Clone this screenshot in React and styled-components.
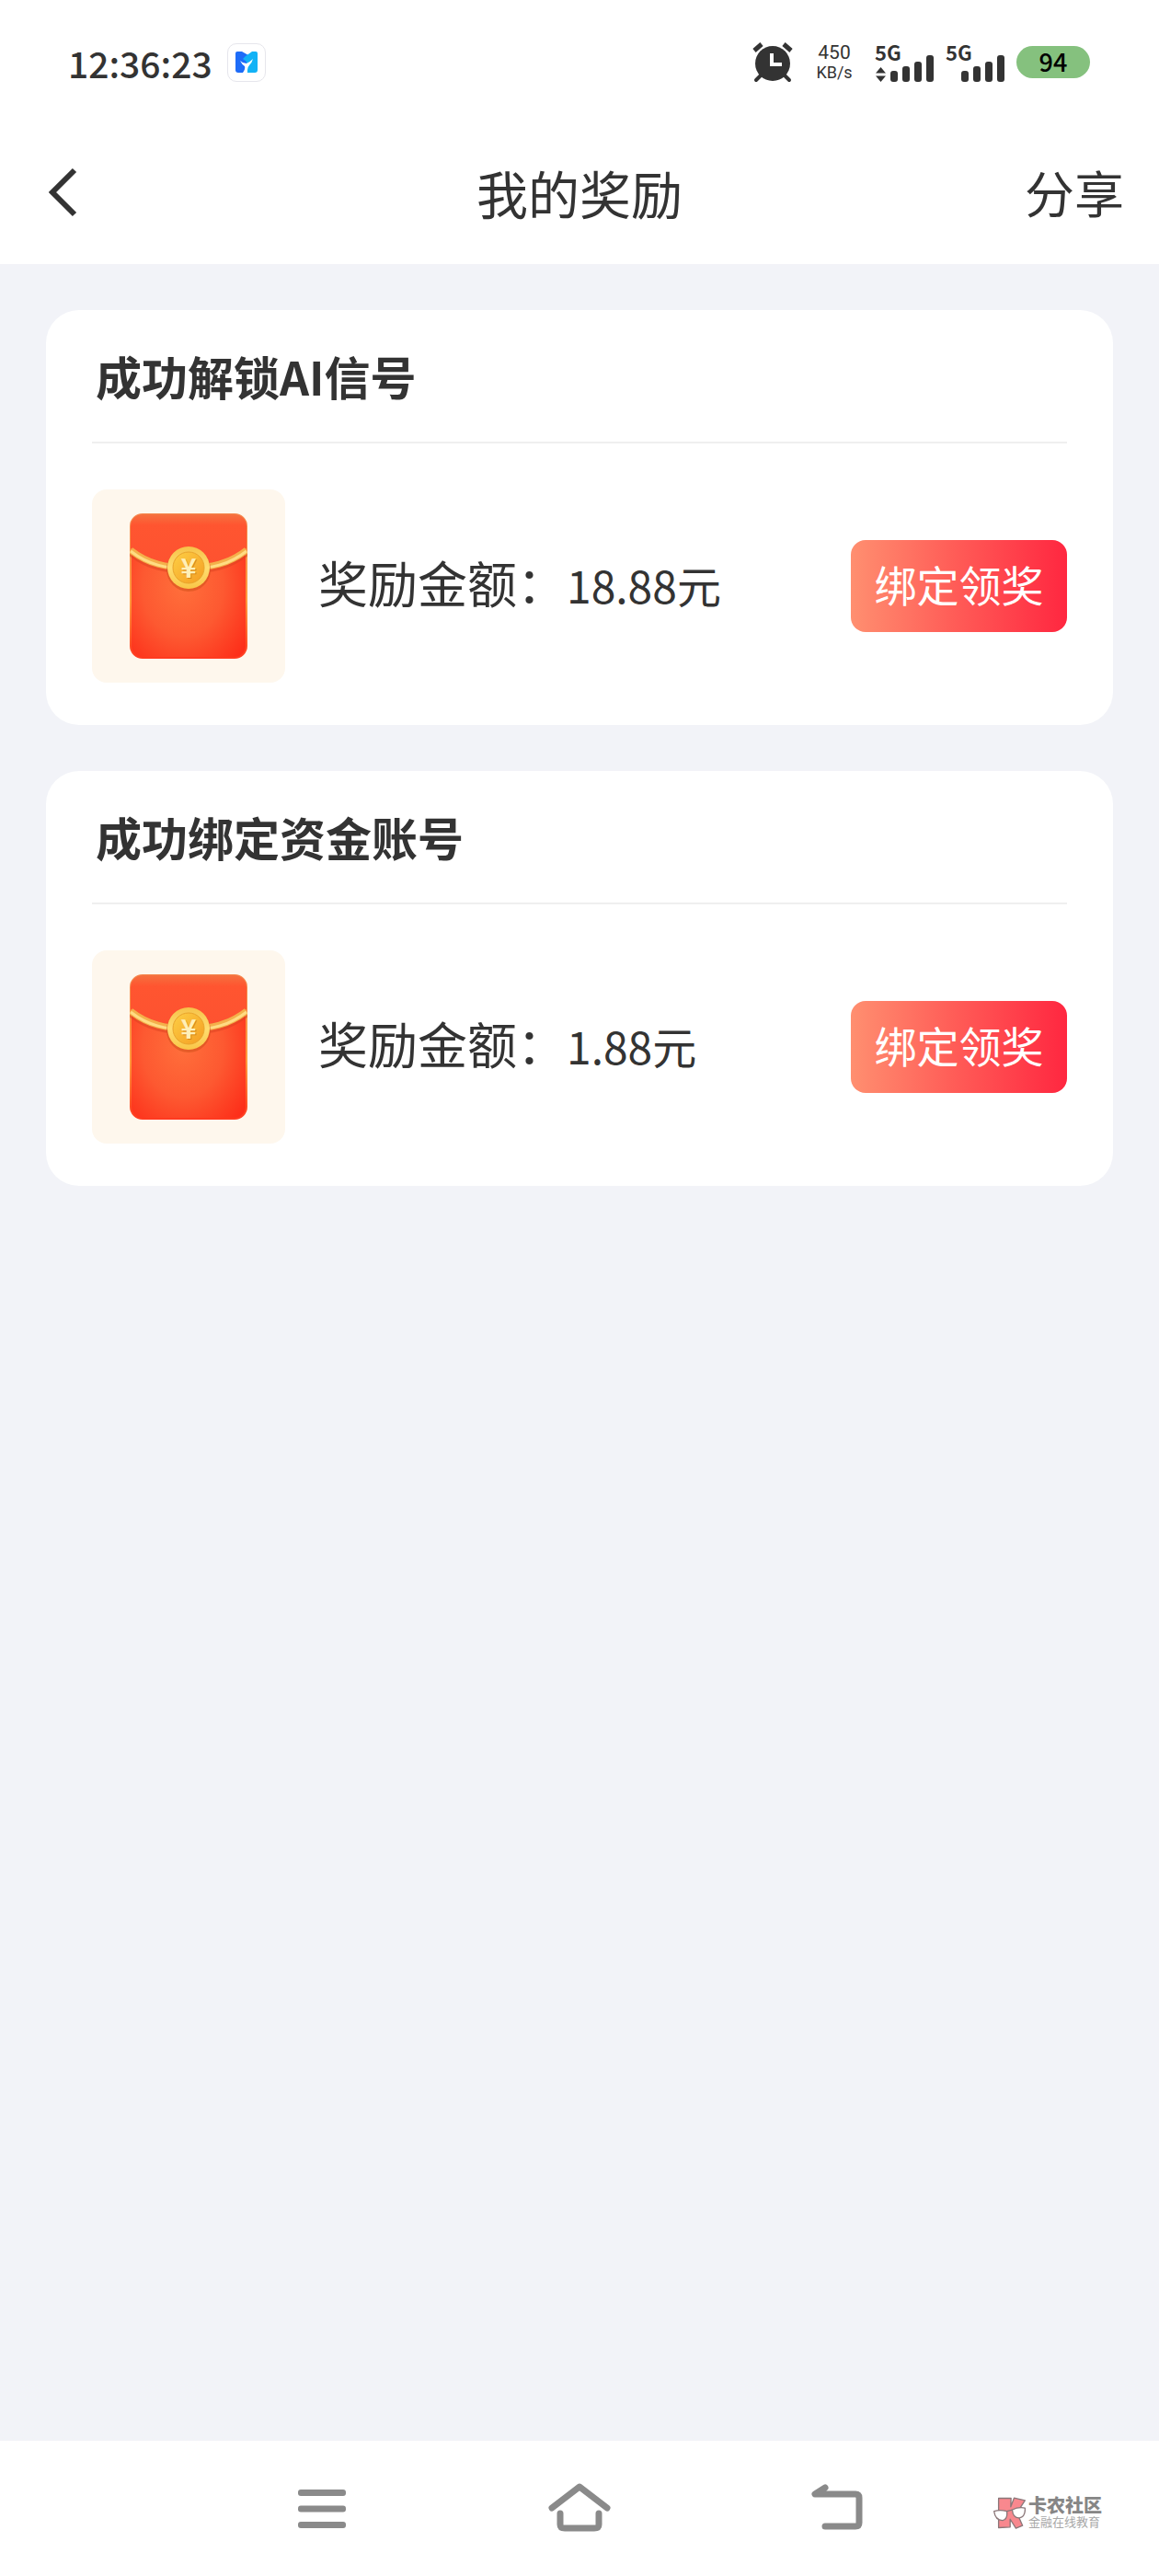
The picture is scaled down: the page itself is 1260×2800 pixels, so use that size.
import styled, { createGlobalStyle } from 'styled-components';

const GlobalStyle = createGlobalStyle`
  * {
    box-sizing: border-box;
  }
  body {
    margin: 0;
    background: #f2f3f8;
    color: #333333;
    font-family: 'Noto Sans CJK SC', sans-serif;
  }
  h1, h2, p {
    margin: 0;
  }
  button {
    font-family: inherit;
    color: inherit;
    border: none;
    padding: 0;
    background: none;
    cursor: pointer;
  }
  svg {
    display: block;
  }
`;

const Page = styled.div`
  min-height: 100vh;
  display: flex;
  flex-direction: column;
`;

/* status bar */

const StatusBar = styled.div`
  height: 137px;
  padding: 0 75px 2px 74px;
  background: #ffffff;
  display: flex;
  align-items: center;
  justify-content: space-between;
`;

const StatusGroup = styled.div`
  display: flex;
  align-items: center;
`;

const Clock = styled.span`
  font-size: 39px;
  font-weight: 500;
  line-height: 48px;
`;

const AppBadge = styled.span`
  width: 42px;
  height: 42px;
  margin-left: 16px;
  border: 1px solid #e6e6ec;
  border-radius: 10px;
  display: flex;
  align-items: center;
  justify-content: center;
`;

const NetSpeed = styled.div`
  width: 36px;
  margin: 0 26px 0 27px;
  display: flex;
  flex-direction: column;
  align-items: center;
  font-family: Roboto, sans-serif;
  font-size: 18px;
  line-height: 22px;
  span:first-child {
    font-size: 21px;
  }
`;

const Signal = styled.div`
  width: 64px;
  height: 42px;
  margin-right: 13px;
  font-size: 22px;
  font-weight: 700;
  line-height: 18px;
  display: flex;
  flex-direction: column;
`;

const SignalBars = styled.div`
  height: 30px;
  margin-top: -6px;
  display: flex;
  align-items: flex-end;
  justify-content: flex-end;
  gap: 5px;
`;

const Bar = styled.i`
  width: 8px;
  height: ${(props) => props.$height}px;
  border-radius: 3px;
  background: #333333;
`;

const Battery = styled.span`
  width: 80px;
  height: 35px;
  border-radius: 18px;
  background: #85c17e;
  color: #000000;
  font-size: 27px;
  font-weight: 500;
  line-height: 33px;
  text-align: center;
`;

/* page header */

const Header = styled.header`
  height: 150px;
  padding: 0 38px 6px 50px;
  background: #ffffff;
  display: grid;
  grid-template-columns: 1fr auto 1fr;
  align-items: center;
  h1 {
    font-size: 56px;
    font-weight: 400;
    line-height: 80px;
    /* side paddings differ, keep the title on the middle of the screen */
    margin-left: -12px;
  }
`;

const BackButton = styled.button`
  justify-self: start;
`;

const ShareButton = styled.button`
  justify-self: end;
  font-size: 54px;
  line-height: 80px;
`;

/* reward cards */

const RewardList = styled.main`
  flex: 1;
  padding: 50px;
  display: flex;
  flex-direction: column;
  gap: 50px;
`;

const Card = styled.section`
  padding: 0 50px 46px;
  border-radius: 36px;
  background: #ffffff;
`;

const CardTitle = styled.h2`
  padding: 35px 4px 36px;
  border-bottom: 2px solid #efefef;
  font-size: 50px;
  font-weight: 700;
  line-height: 72px;
`;

const CardBody = styled.div`
  padding-top: 50px;
  display: flex;
  align-items: center;
`;

const Thumb = styled.div`
  width: 210px;
  height: 210px;
  border-radius: 16px;
  background: #fef7ed;
  display: flex;
  align-items: center;
  justify-content: center;
`;

const Amount = styled.p`
  flex: 1;
  margin-left: 36px;
  padding-bottom: 6px;
  display: flex;
  align-items: baseline;
  font-size: 54px;
  line-height: 80px;
  span:last-child {
    font-size: 48px;
  }
`;

const ClaimButton = styled.button`
  width: 235px;
  height: 100px;
  padding-bottom: 6px;
  border-radius: 16px;
  background: linear-gradient(90deg, #ff8f70 0%, #ff5a56 50%, #ff2740 100%);
  color: #ffffff;
  font-size: 46px;
  line-height: 90px;
`;

/* system navigation */

const NavBar = styled.nav`
  height: 147px;
  background: #ffffff;
  display: grid;
  grid-template-columns: 3fr 4fr 4fr 4fr 3fr;
  align-items: center;
`;

const NavButton = styled.button`
  grid-column: ${(props) => props.$column};
  justify-self: center;
`;

const Brand = styled.div`
  grid-column: 5;
  justify-self: end;
  margin: 8px 62px 0 0;
  display: flex;
  align-items: center;
  gap: 3px;
`;

const BrandText = styled.div`
  display: flex;
  flex-direction: column;
  white-space: nowrap;
  font-size: 13px;
  line-height: 14px;
  color: #a8a8a8;
  padding-bottom: 2px;
  strong {
    font-size: 20px;
    font-weight: 900;
    line-height: 22px;
    color: #868686;
  }
`;

const AppLogo = () => (
  <svg width="24" height="23" viewBox="0 0 24 23" aria-hidden="true">
    <path d="M2 0h5l7 4v19H3a3 3 0 0 1-3-3V2a2 2 0 0 1 2-2z" fill="#1e6cf8" />
    <path d="M22 0h-4l-7 5-3 3 4 3v12h9a3 3 0 0 0 3-3V2a2 2 0 0 0-2-2z" fill="#12b2f6" />
    <path d="M5 10q3 3 7 3 3-1 7-5-1 4-4 7-2 2-2 5v3H8q3-4 2-7-3-2-5-6z" fill="#ffffff" />
  </svg>
);

const AlarmIcon = () => (
  <svg width="44" height="44" viewBox="0 0 44 44" fill="none" aria-hidden="true">
    <path d="M9 36l-5 5M35 36l5 5" stroke="#333333" strokeWidth="4" strokeLinecap="round" />
    <path d="M2 9l8-7M34 2l8 7" stroke="#333333" strokeWidth="5" />
    <circle cx="22" cy="23" r="19" fill="#333333" />
    <path d="M21 12v12h11" stroke="#ffffff" strokeWidth="4" />
  </svg>
);

const DataArrows = () => (
  <svg width="11" height="16" viewBox="0 0 22 32" fill="#333333" aria-hidden="true">
    <path d="M11 0l11 13H0zM11 32L0 19h22z" />
  </svg>
);

const BackIcon = () => (
  <svg width="36" height="56" viewBox="0 0 36 56" fill="none" aria-hidden="true">
    <path d="M31 4L7 28l24 24" stroke="#333333" strokeWidth="6" />
  </svg>
);

const RedEnvelope = ({ id }) => (
  <svg width="128" height="158" viewBox="0 0 128 158" role="img" aria-label="红包">
    <defs>
      <radialGradient id={`${id}-body`} cx="0.45" cy="0.5" r="0.7">
        <stop offset="0" stopColor="#ff6f3b" />
        <stop offset="0.5" stopColor="#fd5931" />
        <stop offset="1" stopColor="#fd2c18" />
      </radialGradient>
      <linearGradient id={`${id}-flap`} x1="0" y1="0" x2="0" y2="1">
        <stop offset="0" stopColor="#f5713f" />
        <stop offset="0.2" stopColor="#ff5530" />
        <stop offset="1" stopColor="#fd5230" />
      </linearGradient>
      <linearGradient id={`${id}-edge`} x1="0" y1="0" x2="0" y2="1">
        <stop offset="0" stopColor="#f58a50" />
        <stop offset="0.6" stopColor="#ff9a3c" />
        <stop offset="1" stopColor="#ff3a20" />
      </linearGradient>
      <linearGradient id={`${id}-coin`} x1="0" y1="0" x2="0" y2="1">
        <stop offset="0" stopColor="#f6c248" />
        <stop offset="0.5" stopColor="#ffdd70" />
        <stop offset="1" stopColor="#f9c647" />
      </linearGradient>
      <linearGradient id={`${id}-inner`} x1="0" y1="0" x2="1" y2="1">
        <stop offset="0" stopColor="#fdcf45" />
        <stop offset="1" stopColor="#f49d22" />
      </linearGradient>
    </defs>
    <rect x="1" y="1" width="126" height="156" rx="13" fill={`url(#${id}-body)`} stroke={`url(#${id}-edge)`} strokeWidth="2" />
    <path d="M1 38V14A13 13 0 0 1 14 1h100a13 13 0 0 1 13 13v24Q64 82 1 38z" fill={`url(#${id}-flap)`} />
    <path d="M1 43C20 58 40 62 64 62S108 58 127 43" stroke="#d9421f" strokeWidth="7" fill="none" opacity="0.5" />
    <path d="M1 40C20 55 40 59 64 59S108 55 127 40" stroke="#f4b04a" strokeWidth="7" fill="none" />
    <path d="M1 41C20 56 40 60 64 60S108 56 127 41" stroke="#ffdc83" strokeWidth="3" fill="none" />
    <circle cx="64" cy="61" r="24" fill="#d4521c" opacity="0.6" />
    <circle cx="64" cy="59" r="23" fill={`url(#${id}-coin)`} />
    <circle cx="64" cy="59" r="17" fill={`url(#${id}-inner)`} stroke="#e9a32b" strokeWidth="1" />
    <text x="65" y="71" textAnchor="middle" fontSize="29" fontWeight="700" fill="#d98718" aria-hidden="true">¥</text>
    <text x="64" y="70" textAnchor="middle" fontSize="29" fontWeight="700" fill="#fff0b8">¥</text>
  </svg>
);

const MenuIcon = () => (
  <svg width="52" height="42" viewBox="0 0 104 84" fill="#8a8a8a" aria-hidden="true">
    <rect width="104" height="14" rx="6" />
    <rect y="35" width="104" height="14" rx="6" />
    <rect y="70" width="104" height="14" rx="6" />
  </svg>
);

const HomeIcon = () => (
  <svg width="68" height="58" viewBox="0 0 68 58" fill="none" stroke="#8a8a8a" strokeLinecap="round" strokeLinejoin="round" aria-hidden="true">
    <path d="M4 28L34 5l30 23" strokeWidth="7" />
    <path d="M13 34v12q0 4 5 4h32q5 0 5-4V34" strokeWidth="7" />
  </svg>
);

const ReturnIcon = () => (
  <svg width="56" height="56" viewBox="0 0 56 56" fill="none" stroke="#8a8a8a" strokeWidth="7" strokeLinecap="round" strokeLinejoin="round" aria-hidden="true">
    <path d="M15 5L4 12h44q4 0 4 4v27q0 4-4 4H15" />
  </svg>
);

const BrandLogo = () => (
  <svg width="35" height="36" viewBox="0 0 106 108" stroke="#8b7779" strokeWidth="4" strokeLinejoin="round" aria-hidden="true">
    <path d="M17 7h41l-1 28L68 6l36 8-27 41 19 42-22 9-19-30v26l-38 2z" fill="#f8888e" />
    <path d="M2 50q20-6 42 0 4 26-14 30Q6 80 2 50z" fill="#ffffff" />
    <path d="M62 45q20-10 42-6 2 28-18 33-22 1-24-27z" fill="#ffffff" />
    <path d="M44 50l18-5" />
  </svg>
);

const rewards = [
  { id: 'signal', title: '成功解锁AI信号', amount: '18.88元' },
  { id: 'account', title: '成功绑定资金账号', amount: '1.88元' },
];

const bars = [12, 17, 22, 29];

const SignalLevel = ({ active }) => (
  <Signal>
    <span>5G</span>
    <SignalBars>
      {active && <DataArrows />}
      {bars.map((height) => (
        <Bar key={height} $height={height} />
      ))}
    </SignalBars>
  </Signal>
);

const RewardCard = ({ id, title, amount }) => (
  <Card>
    <CardTitle>{title}</CardTitle>
    <CardBody>
      <Thumb>
        <RedEnvelope id={id} />
      </Thumb>
      <Amount>
        <span>奖励金额：</span>
        <span>{amount}</span>
      </Amount>
      <ClaimButton type="button">绑定领奖</ClaimButton>
    </CardBody>
  </Card>
);

const App = () => {
  return (
    <Page>
      <GlobalStyle />
      <StatusBar>
        <StatusGroup>
          <Clock>12:36:23</Clock>
          <AppBadge>
            <AppLogo />
          </AppBadge>
        </StatusGroup>
        <StatusGroup>
          <AlarmIcon />
          <NetSpeed>
            <span>450</span>
            <span>KB/s</span>
          </NetSpeed>
          <SignalLevel active />
          <SignalLevel />
          <Battery>94</Battery>
        </StatusGroup>
      </StatusBar>
      <Header>
        <BackButton type="button" aria-label="返回">
          <BackIcon />
        </BackButton>
        <h1>我的奖励</h1>
        <ShareButton type="button">分享</ShareButton>
      </Header>
      <RewardList>
        {rewards.map((reward) => (
          <RewardCard key={reward.id} {...reward} />
        ))}
      </RewardList>
      <NavBar>
        <NavButton type="button" $column={2} aria-label="菜单">
          <MenuIcon />
        </NavButton>
        <NavButton type="button" $column={3} aria-label="主页">
          <HomeIcon />
        </NavButton>
        <NavButton type="button" $column={4} aria-label="后退">
          <ReturnIcon />
        </NavButton>
        <Brand>
          <BrandLogo />
          <BrandText>
            <strong>卡农社区</strong>
            <span>金融在线教育</span>
          </BrandText>
        </Brand>
      </NavBar>
    </Page>
  );
};

export default App;
